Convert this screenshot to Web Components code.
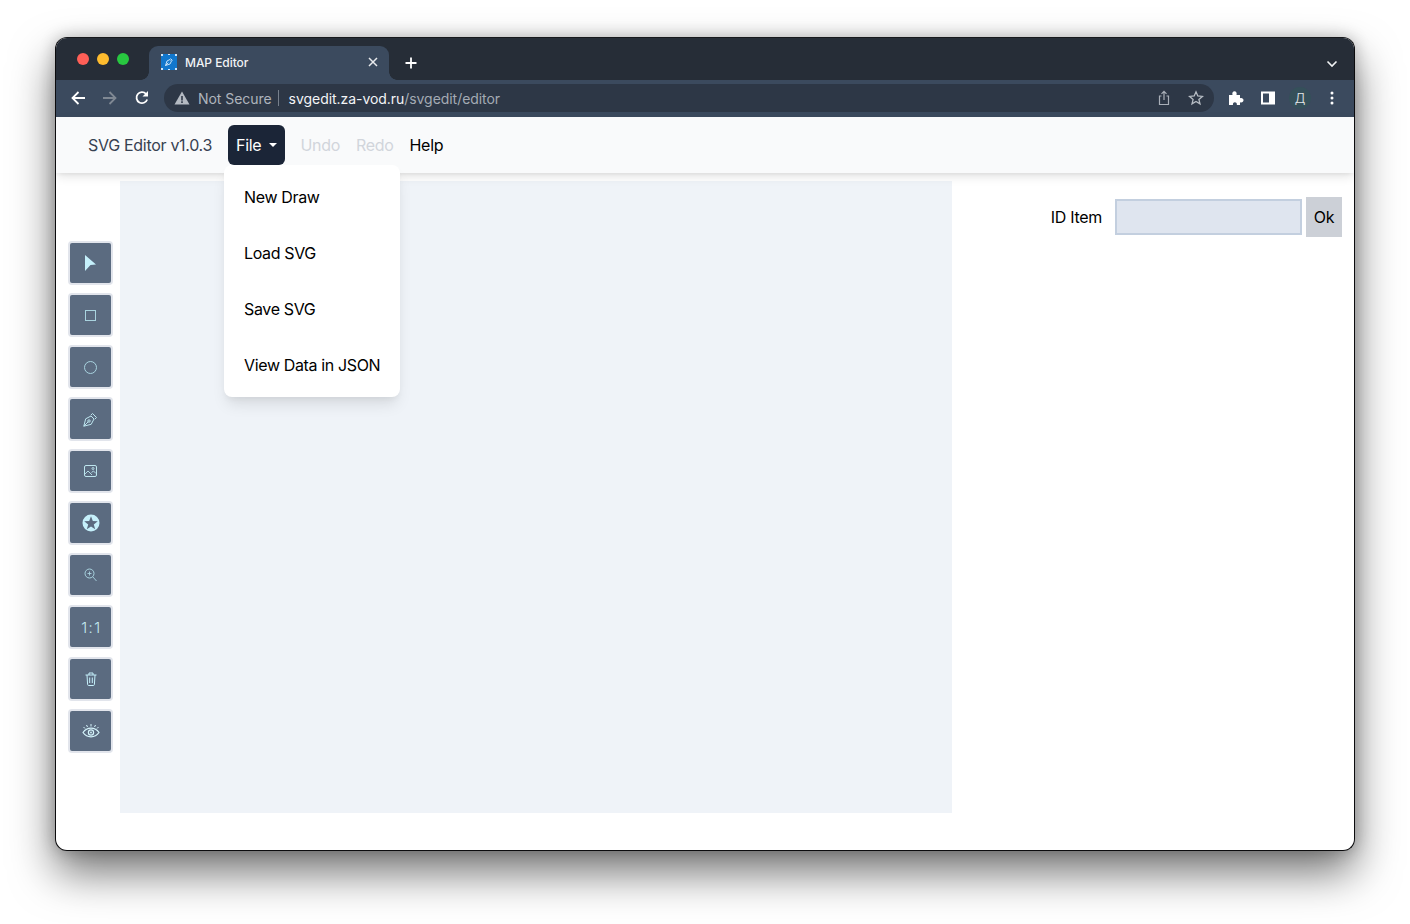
<!DOCTYPE html>
<html>
<head>
<meta charset="utf-8">
<title>MAP Editor</title>
<style>
    html, body { margin: 0; background: #fff; }
    body { padding: 37px 55px 0; height: 924px; box-sizing: border-box; overflow: hidden; font-family: Inter, "Liberation Sans", sans-serif; }
</style>
</head>
<body>
<browser-window>
    <browser-tabs title-text="MAP Editor"></browser-tabs>
    <browser-toolbar></browser-toolbar>
    <app-navbar version="SVG Editor v1.0.3"></app-navbar>
    <editor-body></editor-body>
</browser-window>

<script>
class BrowserWindow extends HTMLElement {
    constructor() {
        super();
        this.attachShadow({ mode: 'open' });
        this.shadowRoot.innerHTML = `
            <style>
                :host {
                    display: flex;
                    flex-direction: column;
                    width: 1300px;
                    height: 814px;
                    box-sizing: border-box;
                    border-radius: 12px;
                    background: #fff;
                    border: 1px solid #0b0b0d;
                    border-top-color: #17191d;
                    box-shadow: 0 22px 44px rgba(0,0,0,.54), 0 0 16px rgba(0,0,0,.24);
                    overflow: hidden;
                }
            </style>
            <slot></slot>
        `;
    }
}

class BrowserTabs extends HTMLElement {
    constructor() {
        super();
        this.attachShadow({ mode: 'open' });
    }

    connectedCallback() {
        this.shadowRoot.innerHTML = `
            <style>
                :host { display: flex; align-items: flex-end; height: 42px; background: #262d37; flex: none; font-family: Inter, "Liberation Sans", sans-serif; }
                .lights { display: flex; gap: 8px; width: 93px; padding: 0 0 15px 21px; box-sizing: border-box; }
                .lights i { width: 12px; height: 12px; border-radius: 50%; }
                .tab { position: relative; display: flex; align-items: center; width: 240px; height: 34px; box-sizing: border-box; padding: 0 11px 2px 12px; background: #3b4a5e; border-radius: 9px 9px 0 0; color: #f1f3f5; font-size: 12px; font-weight: 500; }
                .tab::before, .tab::after { content: ""; position: absolute; bottom: 0; width: 8px; height: 8px; background: radial-gradient(circle at 0 0, transparent 7.5px, #3b4a5e 8px); }
                .tab::before { left: -8px; }
                .tab::after { right: -8px; background: radial-gradient(circle at 100% 0, transparent 7.5px, #3b4a5e 8px); }
                .title { margin-left: 8px; flex: 1; letter-spacing: -.05px; }
                svg { display: block; flex: none; }
                .plus { margin: 0 0 10px 15px; }
                .chev { margin: 0 16px 12px auto; }
            </style>
            <div class="lights">
                <i style="background:#ff5f57"></i><i style="background:#febc2e"></i><i style="background:#28c840"></i>
            </div>
            <div class="tab">
                <svg width="16" height="16" viewBox="0 0 16 16">
                    <rect width="16" height="16" fill="#1277cc"/>
                    <g fill="#cfe6fa"><rect width="2" height="2"/><rect x="14" width="2" height="2"/><rect y="14" width="2" height="2"/><rect x="14" y="14" width="2" height="2"/><rect x="7" width="2" height="1"/><rect x="7" y="15" width="2" height="1"/></g>
                    <path d="M4.500 11.500 6 7l3-1.500 1.500 1.500L9 10zM4.500 11.500 7.300 8.700M9.500 4.500l2 2" fill="none" stroke="#d6ebfb" stroke-width=".9"/>
                </svg>
                <span class="title">${this.getAttribute('title-text')}</span>
                <svg width="10" height="10" viewBox="0 0 10 10"><path d="M1 1l8 8M9 1l-8 8" stroke="#e8eaed" stroke-width="1.500"/></svg>
            </div>
            <svg class="plus" width="14" height="14" viewBox="0 0 14 14"><path d="M7 1.500v11M1.500 7h11" stroke="#fff" stroke-width="1.800"/></svg>
            <svg class="chev" width="12" height="8" viewBox="0 0 12 8"><path d="M1.500 1.500 6 6l4.500-4.500" fill="none" stroke="#f1f3f4" stroke-width="1.600"/></svg>
        `;
    }
}

class BrowserToolbar extends HTMLElement {
    constructor() {
        super();
        this.attachShadow({ mode: 'open' });
        this.shadowRoot.innerHTML = `
            <style>
                :host { display: flex; align-items: center; height: 37px; box-sizing: border-box; padding-bottom: 1px; background: #3b4a5e; flex: none; font-family: Inter, "Liberation Sans", sans-serif; font-size: 14px; letter-spacing: -.05px; }
                svg { display: block; flex: none; }
                .nav { display: flex; align-items: center; gap: 16px; padding-left: 14px; }
                .omni { display: flex; align-items: center; width: 1050px; height: 28px; margin-left: 14px; box-sizing: border-box; padding: 0 10px 0 10px; border-radius: 14px; background: #2d3746; }
                .warn { color: #aeb4bc; margin-left: 8px; }
                .sep { width: 1px; height: 16px; background: #77808c; margin: 0 10px 0 6px; }
                .host { color: #f3f4f6; }
                .path { color: #a4abb4; }
                .end { margin-left: auto; display: flex; align-items: center; gap: 16px; }
                .ext { display: flex; align-items: center; gap: 16px; margin-left: 14px; }
                .avatar { width: 22px; height: 22px; margin: 0 -3px; border-radius: 50%; background: #35505a; color: #e4e8ea; display: flex; align-items: center; justify-content: center; font-size: 13px; font-weight: 300; }
            </style>
            <div class="nav">
                <svg width="16" height="16" viewBox="0 0 16 16"><path d="M15 8H2.500M8.500 2 2.500 8l6 6" fill="none" stroke="#fff" stroke-width="1.800"/></svg>
                <svg width="16" height="16" viewBox="0 0 16 16"><path d="M1 8h12.500M7.500 2l6 6-6 6" fill="none" stroke="#7f8893" stroke-width="1.800"/></svg>
                <svg width="16" height="16" viewBox="0 0 16 16"><path d="M13.200 9.500A5.500 5.500 0 1 1 12 3.800" fill="none" stroke="#fff" stroke-width="1.800"/><path d="M14 1v5.500H8.500z" fill="#fff"/></svg>
            </div>
            <div class="omni">
                <svg width="16" height="14" viewBox="0 0 16 14"><path d="M8 .5 15.500 13.500H.5z" fill="#b4bac2"/><path d="M7.200 5h1.600v4.500H7.200zM7.200 10.300h1.600V12H7.200z" fill="#2d3746"/></svg>
                <span class="warn">Not Secure</span>
                <span class="sep"></span>
                <span class="host">svgedit.za-vod.ru</span><span class="path">/svgedit/editor</span>
                <div class="end">
                    <svg style="margin-right:1px" width="14" height="16" viewBox="0 0 14 16"><path d="M4.500 6H2.500v8.500h9V6H9.500M7 10V1.500M4.500 3.800 7 1.300l2.500 2.500" fill="none" stroke="#a9afb8" stroke-width="1.200"/></svg>
                    <svg width="16" height="16" viewBox="0 0 16 16"><path d="M8 1.800 9.800 6l4.600.4-3.500 3 1.100 4.500L8 11.500l-4 2.400 1.100-4.500-3.500-3L6.200 6z" fill="none" stroke="#b6bcc4" stroke-width="1.300"/></svg>
                </div>
            </div>
            <div class="ext">
                <svg width="16" height="16" viewBox="0 0 16 16"><path d="M1 5h3.500C3.800 2.800 5 1.200 6.500 1.200S9.200 2.800 8.500 5H12v3.300c2-.7 3.500.5 3.500 2s-1.500 2.700-3.500 2V15H8.800c.5-1.700-.6-2.800-1.900-2.800S4.500 13.300 5 15H1z" fill="#fff"/></svg>
                <svg width="16" height="16" viewBox="0 0 16 16"><path fill-rule="evenodd" d="M1 1.500h14v13H1zM3 3.500v9h6v-9z" fill="#fff"/></svg>
                <div class="avatar">Д</div>
                <svg style="margin-left:6px" width="4" height="14" viewBox="0 0 4 14"><circle cx="2" cy="2" r="1.500" fill="#fff"/><circle cx="2" cy="7" r="1.500" fill="#fff"/><circle cx="2" cy="12" r="1.500" fill="#fff"/></svg>
            </div>
        `;
    }
}

class AppNavbar extends HTMLElement {
    constructor() {
        super();
        this.attachShadow({ mode: 'open' });
    }

    connectedCallback() {
        this.shadowRoot.innerHTML = `
            <style>
                :host { position: relative; z-index: 2; display: flex; align-items: center; height: 56px; flex: none; padding-left: 32px; background: #f9fafb; box-shadow: 0 4px 10px -1px rgba(0,0,0,.12), 0 2px 4px -1px rgba(0,0,0,.06); font-size: 16px; letter-spacing: -.3px; color: #000; }
                .brand { color: #374151; margin-right: 16px; }
                .menu { position: relative; margin-right: 15px; }
                .file { display: flex; align-items: center; height: 40px; padding: 0 8px; border-radius: 6px; background: #1b2537; color: #fff; }
                .file i { width: 0; height: 0; margin-left: 8px; border: 4px solid transparent; border-top-color: #fff; border-bottom: 0; }
                .off { color: #d1d5db; margin-right: 16px; }
                .drop { position: absolute; top: 40px; left: -4px; width: 176px; padding: 4px 0; box-sizing: border-box; background: #fff; border-radius: 8px; letter-spacing: -.36px; box-shadow: 0 10px 15px -3px rgba(0,0,0,.1), 0 4px 6px -2px rgba(0,0,0,.05); }
                .drop div { display: flex; align-items: center; height: 56px; padding-left: 20px; white-space: nowrap; }
            </style>
            <span class="brand">${this.getAttribute('version')}</span>
            <div class="menu">
                <div class="file">File<i></i></div>
                <div class="drop">
                    <div>New Draw</div>
                    <div>Load SVG</div>
                    <div>Save SVG</div>
                    <div>View Data in JSON</div>
                </div>
            </div>
            <span class="off">Undo</span>
            <span class="off">Redo</span>
            <span>Help</span>
        `;
    }
}

class ToolButton extends HTMLElement {
    constructor() {
        super();
        this.attachShadow({ mode: 'open' });
        this.shadowRoot.innerHTML = `
            <style>
                :host { display: flex; align-items: center; justify-content: center; width: 45px; height: 44px; box-sizing: border-box; background: #5b6b80; border: 2px solid #e2e5ec; border-radius: 4px; color: #c5eaf2; font-size: 15px; font-weight: 300; font-family: Inter, "Liberation Sans", sans-serif; letter-spacing: 1.5px; }
                ::slotted(svg) { display: block; }
                ::slotted(span) { margin-left: 2px; }
            </style>
            <slot></slot>
        `;
    }
}

class ToolRail extends HTMLElement {
    constructor() {
        super();
        this.attachShadow({ mode: 'open' });
        this.shadowRoot.innerHTML = `
            <style>
                :host { display: flex; flex-direction: column; gap: 8px; width: 64px; flex: none; box-sizing: border-box; padding: 68px 0 0 12px; }
            </style>
            <tool-button><svg width="11" height="16" viewBox="0 0 11 16"><path d="M0 0l11 9.500-5.500.6L0 16z" fill="#c5f0fb"/></svg></tool-button>
            <tool-button><svg width="11" height="11" viewBox="0 0 11 11"><rect x=".5" y=".5" width="10" height="10" fill="none" stroke="#a9d3df"/></svg></tool-button>
            <tool-button><svg width="13" height="13" viewBox="0 0 13 13"><circle cx="6.500" cy="6.500" r="6" fill="none" stroke="#a9d3df"/></svg></tool-button>
            <tool-button><svg width="15" height="15" viewBox="0 0 15 15"><path d="M.8 14.200 2.700 6.800 8 4l3 3-2.800 5.300zM.8 14.200l4.400-4.400M7.800 3.200l1.700-1.700 4 4-1.700 1.700" fill="none" stroke="#bde5ee"/><circle cx="6" cy="9" r="1.200" fill="none" stroke="#bde5ee"/></svg></tool-button>
            <tool-button><svg width="13" height="12" viewBox="0 0 13 12"><rect x=".5" y=".5" width="12" height="11" rx="1.500" fill="none" stroke="#bde5ee"/><path d="M1 9l3-3 4 4M7.500 7.500l2-1.500 2.500 2.500" fill="none" stroke="#bde5ee" stroke-width=".9"/><circle cx="9" cy="3.500" r="1" fill="none" stroke="#bde5ee" stroke-width=".9"/></svg></tool-button>
            <tool-button><svg width="18" height="18" viewBox="0 0 18 18"><path fill-rule="evenodd" d="M9 .5a8.500 8.500 0 1 1 0 17 8.500 8.500 0 0 1 0-17zM9 2.200l-1.800 4.900-5 .1 4 3.200-1.400 4.900L9 12.400l4.200 2.900-1.400-4.900 4-3.200-5-.1z" fill="#c5f0fb"/></svg></tool-button>
            <tool-button><svg width="13" height="14" viewBox="0 0 13 14"><circle cx="5.500" cy="5.500" r="4.500" fill="none" stroke="#a9d3df"/><path d="M8.800 8.800 12.500 13M5.500 3.500v4M3.500 5.500h4" fill="none" stroke="#a9d3df" stroke-width=".9"/></svg></tool-button>
            <tool-button><span>1:1</span></tool-button>
            <tool-button><svg width="12" height="14" viewBox="0 0 12 14"><path d="M.5 3h11M4 3V1h4v2M2 3l.6 9.500c0 .6.500 1 1 1h4.800c.5 0 1-.4 1-1L10 3M4.700 5.500v5.500M7.300 5.500v5.500" fill="none" stroke="#c5f0fb"/></svg></tool-button>
            <tool-button><svg width="18" height="14" viewBox="0 0 18 14"><path d="M1 8.500C3 5.700 6 4.200 9 4.200s6 1.500 8 4.300c-2 2.800-5 4.300-8 4.300S3 11.300 1 8.500z" fill="none" stroke="#d6f5fc" stroke-width="1.200"/><circle cx="9" cy="8.500" r="2.600" fill="none" stroke="#d6f5fc" stroke-width="1.200"/><circle cx="9" cy="8.500" r=".9" fill="#d6f5fc"/><path d="M9 0v2.500M4.500 1l1 2M13.500 1l-1 2M1.500 3l1.500 1.500M16.500 3 15 4.500" stroke="#d6f5fc"/></svg></tool-button>
        `;
    }
}

class IdForm extends HTMLElement {
    constructor() {
        super();
        this.attachShadow({ mode: 'open' });
        this.shadowRoot.innerHTML = `
            <style>
                :host { display: flex; align-items: center; justify-content: flex-end; flex: 1; height: 40px; margin-top: 24px; padding-right: 12px; font-size: 16px; letter-spacing: -.3px; color: #000; }
                input { width: 187px; height: 36px; box-sizing: border-box; margin: 0 4px 0 13px; padding: 0; background: #dfe5ef; border: 2px solid #c3cfdf; outline: 0; }
                button { width: 36px; height: 40px; padding: 0; border: 0; background: #ccd0d7; font: inherit; letter-spacing: inherit; color: #000; }
            </style>
            <span>ID Item</span><input type="text"><button>Ok</button>
        `;
    }
}

class EditorBody extends HTMLElement {
    constructor() {
        super();
        this.attachShadow({ mode: 'open' });
        this.shadowRoot.innerHTML = `
            <style>
                :host { display: flex; flex: 1; min-height: 0; }
                .canvas { width: 832px; height: 632px; margin-top: 8px; background: #eff3f8; flex: none; }
            </style>
            <tool-rail></tool-rail>
            <div class="canvas"></div>
            <id-form></id-form>
        `;
    }
}

customElements.define('browser-window', BrowserWindow);
customElements.define('browser-tabs', BrowserTabs);
customElements.define('browser-toolbar', BrowserToolbar);
customElements.define('app-navbar', AppNavbar);
customElements.define('tool-button', ToolButton);
customElements.define('tool-rail', ToolRail);
customElements.define('id-form', IdForm);
customElements.define('editor-body', EditorBody);
</script>
</body>
</html>
